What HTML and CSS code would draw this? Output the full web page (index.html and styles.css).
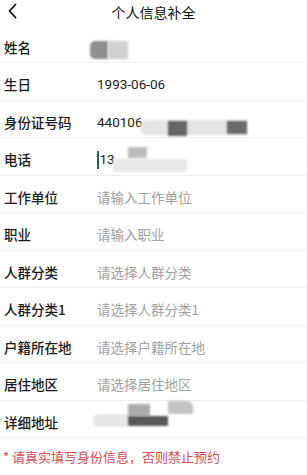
FILE: index.html
```html
<!DOCTYPE html>
<html lang="zh">
<head>
<meta charset="utf-8">
<link rel="stylesheet" href="styles.css">
</head>
<body>
<div class="page">
  <header class="header">
    <svg class="back" width="11" height="16" viewBox="0 0 11 16"><path d="M8.5 1.5 L2.5 8 L8.5 14.5" fill="none" stroke="#111" stroke-width="1.8" stroke-linecap="round" stroke-linejoin="round"/></svg>
    <div class="title">个人信息补全</div>
  </header>
  <div class="form">
    <div class="row"><div class="label">姓名</div><div class="value">
      <span class="blob" style="left:-7px;top:2px;width:18px;height:18px;background:#8f8f8f;border-radius:5px 0 0 5px"></span>
      <span class="blob" style="left:11px;top:2px;width:20px;height:18px;background:#d0d0d0"></span>
    </div></div>
    <div class="row"><div class="label">生日</div><div class="value text">1993-06-06</div></div>
    <div class="row"><div class="label">身份证号码</div><div class="value text">440106
      <span class="blob" style="left:43px;top:6px;width:107px;height:15px;background:#e4e4e4;border-radius:7px 0 0 7px"></span>
      <span class="blob" style="left:71px;top:7px;width:19px;height:15px;background:#656565"></span>
      <span class="blob" style="left:130px;top:7px;width:20px;height:13px;background:#6a6a6a"></span>
    </div></div>
    <div class="row"><div class="label">电话</div><div class="value text"><span class="cursor"></span>13
      <span class="blob" style="left:16px;top:8px;width:74px;height:13px;background:#e8e8e8"></span>
      <span class="blob" style="left:31px;top:-4px;width:19px;height:11px;background:#bdbdbd"></span>
    </div></div>
    <div class="row"><div class="label">工作单位</div><div class="value ph">请输入工作单位</div></div>
    <div class="row"><div class="label">职业</div><div class="value ph">请输入职业</div></div>
    <div class="row"><div class="label">人群分类</div><div class="value ph">请选择人群分类</div></div>
    <div class="row"><div class="label">人群分类1</div><div class="value ph">请选择人群分类1</div></div>
    <div class="row"><div class="label">户籍所在地</div><div class="value ph">请选择户籍所在地</div></div>
    <div class="row"><div class="label">居住地区</div><div class="value ph">请选择居住地区</div></div>
    <div class="row"><div class="label">详细地址</div><div class="value">
      <span class="blob" style="left:-4px;top:0px;width:35px;height:13px;background:#e6e6e6;border-radius:6px 0 0 6px"></span>
      <span class="blob" style="left:31px;top:-10px;width:22px;height:12px;background:#acacac"></span>
      <span class="blob" style="left:31px;top:2px;width:40px;height:10px;background:#585858"></span>
      <span class="blob" style="left:71px;top:-13px;width:25px;height:13px;background:#c4c4c4;border-radius:0 6px 0 0"></span>
    </div></div>
  </div>
  <div class="warning">* 请真实填写身份信息，否则禁止预约</div>
</div>
</body>
</html>
```
FILE: styles.css
```css
html, body {
  margin: 0;
  padding: 0;
  background: #fff;
}
.page {
  width: 307px;
  font-family: Roboto, "Noto Sans CJK SC", sans-serif;
  color: #222;
}
.header {
  position: relative;
  height: 25.5px;
  display: flex;
  align-items: center;
  justify-content: center;
}
.back {
  position: absolute;
  left: 7px;
  top: 3px;
}
.title {
  font-size: 14px;
  color: #111;
  font-family: "Noto Sans CJK SC", sans-serif;
  margin-top: -2px;
}
.row {
  height: 37.5px;
  box-sizing: border-box;
  border-bottom: 1px solid #efefef;
  display: flex;
  align-items: center;
  padding-top: 6px;
}
.label {
  width: 93px;
  padding-left: 4px;
  font-size: 13.5px;
  color: #1a1a1a;
  font-weight: 500;
  font-family: "Noto Sans CJK SC", sans-serif;
  flex-shrink: 0;
}
.value {
  position: relative;
  flex: 1;
  font-size: 13.5px;
  height: 16px;
  line-height: 16px;
}
.value.text {
  color: #222;
}
.value.ph {
  color: #a0a0a0;
  font-family: "Noto Sans CJK SC", sans-serif;
}
.blob {
  position: absolute;
  filter: blur(1px);
}
.cursor {
  display: inline-block;
  width: 1.5px;
  height: 18px;
  background: #1b6b5a;
  vertical-align: middle;
  margin-right: 1px;
  margin-top: -2px;
}
.warning {
  margin-top: 10px;
  padding-left: 3px;
  font-size: 13px;
  color: #d44b55;
  font-family: "Noto Sans CJK SC", sans-serif;
  line-height: 18px;
}
```
